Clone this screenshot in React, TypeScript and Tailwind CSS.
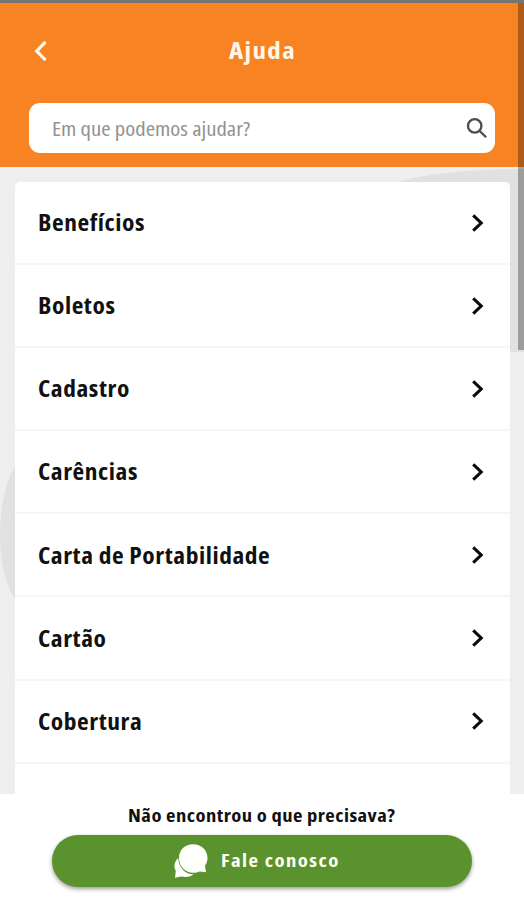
const topics = [
  'Benefícios',
  'Boletos',
  'Cadastro',
  'Carências',
  'Carta de Portabilidade',
  'Cartão',
  'Cobertura',
];

function Chevron() {
  return (
    <svg className="h-5 w-4" viewBox="0 0 16 20" fill="none" stroke="#090909" strokeWidth="3.1">
      <path d="M3.2 2.4 11.2 10 3.2 17.6" />
    </svg>
  );
}

export default function App() {
  return (
    <div className="relative flex h-[900px] w-[524px] flex-col overflow-hidden bg-[#eeeeee] font-['Open_Sans','Noto_Sans',sans-serif] [font-stretch:75%]">
      <header className="relative z-10 flex h-[167px] flex-col border-t-[3px] border-[#777573] bg-[#f78323]">
        <div className="flex h-[96px] items-center px-[33px]">
          <svg className="h-6 w-4" viewBox="0 0 16 24" fill="none" stroke="#fff8e8" strokeWidth="3.2">
            <path d="M12.6 2.9 3.6 12l9 9.1" />
          </svg>
          <h1 className="ml-[180px] origin-left scale-x-[1.145] text-[23.5px] font-bold tracking-[1.2px] text-[#fff8e8]">Ajuda</h1>
        </div>
        <div className="ml-[29px] mt-[4px] flex h-[50px] w-[466px] items-center justify-between rounded-[11px] bg-white pl-[23px] pr-[6px]">
          <span className="origin-left scale-x-[1.165] pt-px text-[19.5px] text-[#929292]">Em que podemos ajudar?</span>
          <svg className="h-6 w-6" viewBox="0 0 24 24" fill="none" stroke="#4d4d4d" strokeWidth="2.3">
            <circle cx="9.7" cy="9.9" r="6.7" />
            <path d="m14.5 14.7 6.6 6.6" />
          </svg>
        </div>
      </header>
      <svg className="absolute left-0 top-0 h-[900px] w-[524px]" viewBox="0 0 524 900">
        <path d="M398 182C430 173 475 169 524 169V352H505V182Z" fill="#e1e1e1" />
        <path d="M15 466C-4 498-6 566 15 600Z" fill="#e1e1e1" />
      </svg>
      <main className="relative ml-[15px] mt-[15px] h-[612px] w-[495px] overflow-hidden rounded-t-[5px] bg-white">
        <ul>
          {topics.map((topic) => (
            <li key={topic} className="flex h-[83.1px] items-center justify-between border-b-2 border-[#f6f6f6] pl-[23px] pr-[24px]">
              <span className="origin-left scale-x-[1.13] pt-px text-[22.5px] font-bold tracking-[0.5px] text-[#111111]">{topic}</span>
              <Chevron />
            </li>
          ))}
        </ul>
      </main>
      <footer className="relative flex h-[106px] flex-col items-center bg-white pt-[8px]">
        <p className="scale-x-[1.145] text-[18px] font-bold leading-[26px] tracking-[0.4px] text-[#111111]">Não encontrou o que precisava?</p>
        <button className="mt-[7px] flex h-[52px] w-[420px] items-center rounded-full bg-[#5a922e] pl-[121px] shadow-[0_2px_4px_rgba(0,0,0,0.4)]">
          <svg className="h-9 w-9" viewBox="0 0 36 36" fill="#fffffb">
            <path d="M5.2 15C1 19 .5 24 2.8 28L2 34.8L8 33.6C13 34.6 18 34 20.5 31.3C12 31.5 5.5 24 5.2 15Z" />
            <path d="M20 1.3C12 1.3 6 7 6 15S12 29.8 20 29.8C23 29.8 25 29.3 26.5 28.4L33 29.3L32 22.8C33.5 20.5 34.5 18 34.5 15C34.5 7 28 1.3 20 1.3Z" />
          </svg>
          <span className="ml-3 origin-left scale-x-[1.12] pb-0.5 text-[18.5px] font-bold tracking-[1.3px] text-[#fffff3]">Fale conosco</span>
        </button>
      </footer>
      <div className="absolute right-0 top-[3px] z-20 h-[347px] w-[6px] bg-black/30" />
    </div>
  );
}
